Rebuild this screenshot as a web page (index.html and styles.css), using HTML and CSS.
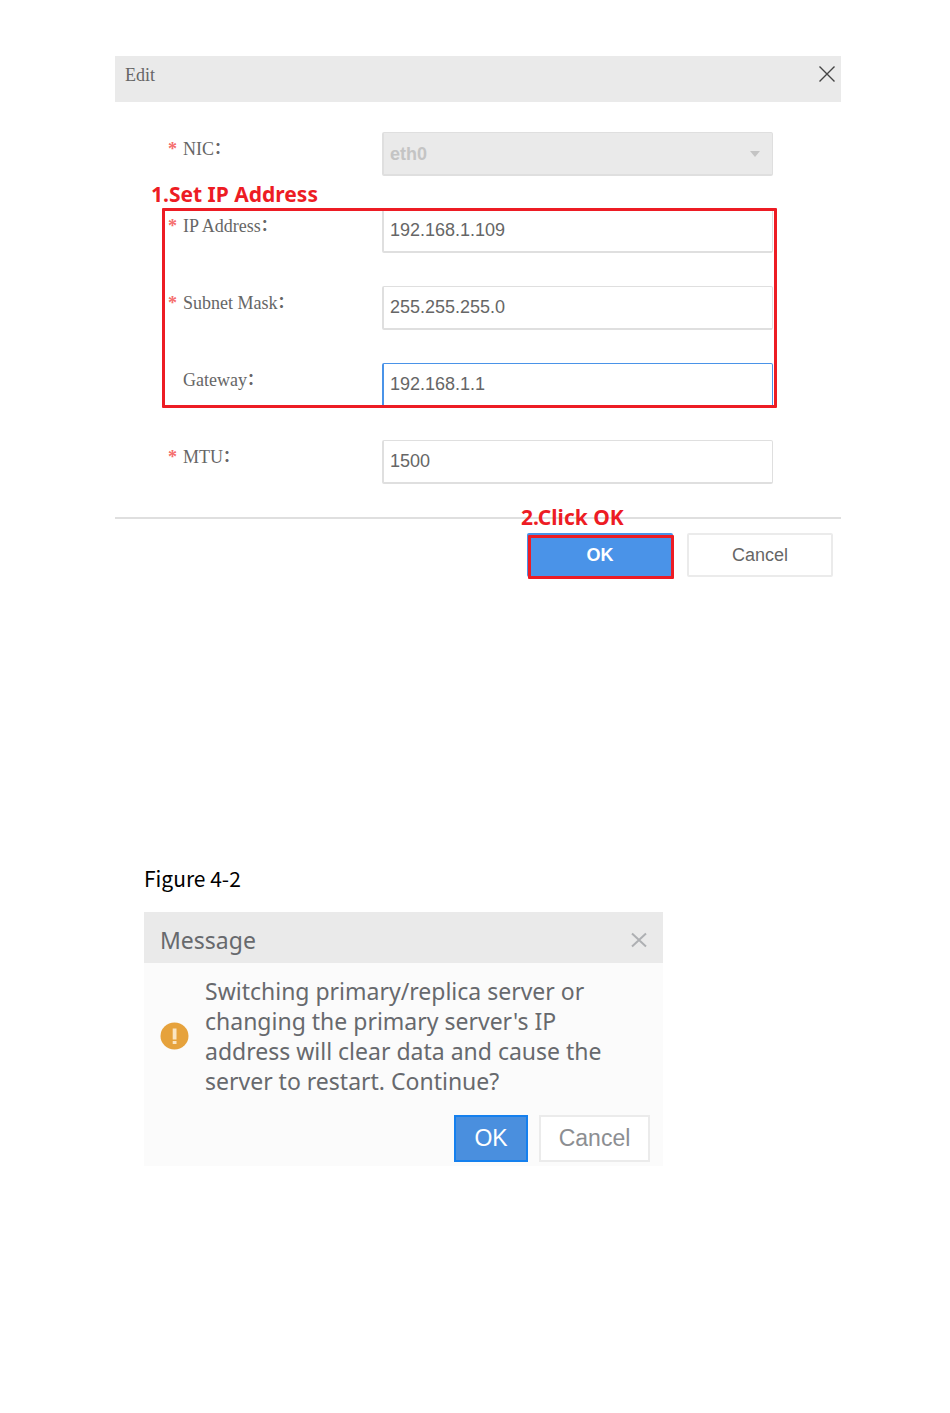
FILE: index.html
```html
<!DOCTYPE html>
<html lang="en">
  <head>
    <meta charset="UTF-8" />
    <meta name="viewport" content="width=device-width, initial-scale=1.0" />
    <title>Edit</title>
    <link rel="stylesheet" href="styles.css">
  </head>
  <body>
    <form class="dialog">
      <div class="dialog-header">
        <h1 class="dialog-title">Edit</h1>
        <button type="button" class="close-btn" aria-label="Close">
          <svg width="18" height="18" viewBox="0 0 18 18" fill="none" stroke="#444" stroke-width="1.4">
            <path d="M1.5 1.5l15 15M16.5 1.5l-15 15" />
          </svg>
        </button>
      </div>

      <div class="dialog-body">
        <div class="row">
          <label for="nic"><span class="star">*</span>NIC<b>：</b></label>
          <div class="select-box">
            <select id="nic" class="field" disabled>
              <option>eth0</option>
            </select>
          </div>
        </div>

        <div class="step-box">
          <span class="step-text step-one">1.Set IP Address</span>
          <div class="row">
            <label for="ip"><span class="star">*</span>IP Address<b>：</b></label>
            <input type="text" id="ip" class="field" value="192.168.1.109" />
          </div>
          <div class="row">
            <label for="mask"><span class="star">*</span>Subnet Mask<b>：</b></label>
            <input type="text" id="mask" class="field" value="255.255.255.0" />
          </div>
          <div class="row">
            <label for="gateway"><span class="star"></span>Gateway<b>：</b></label>
            <input type="text" id="gateway" class="field active" value="192.168.1.1" />
          </div>
        </div>

        <div class="row">
          <label for="mtu"><span class="star">*</span>MTU<b>：</b></label>
          <input type="text" id="mtu" class="field" value="1500" />
        </div>
      </div>

      <div class="dialog-footer">
        <div class="ok-box">
          <span class="step-text step-two">2.Click OK</span>
          <button type="button" class="btn btn-ok">OK</button>
        </div>
        <button type="button" class="btn">Cancel</button>
      </div>
    </form>

    <section class="figure">
      <p class="caption">Figure 4-2</p>
      <div class="message">
        <div class="message-header">
          <h2 class="message-title">Message</h2>
          <button type="button" class="close-btn" aria-label="Close">
            <svg width="18" height="18" viewBox="0 0 18 18" fill="none" stroke="#aeb0b3" stroke-width="2">
              <path d="M2 2.5l14 13M16 2.5l-14 13" />
            </svg>
          </button>
        </div>
        <div class="message-body">
          <svg class="warn-icon" width="29" height="28" viewBox="0 0 29 28">
            <ellipse cx="14.5" cy="14" rx="14" ry="13.5" fill="#e6a23c" />
            <path d="M12.7 6.5h3.8v11h-3.8zM12.7 19h3.8v3h-3.8z" fill="#fae5c3" />
          </svg>
          <p class="message-text">Switching primary/replica server or changing the primary server's IP address will clear data and cause the server to restart. Continue?</p>
        </div>
        <div class="message-footer">
          <button type="button" class="msg-btn msg-ok">OK</button>
          <button type="button" class="msg-btn">Cancel</button>
        </div>
      </div>
    </section>
  </body>
</html>
```
FILE: styles.css
```css
* {
  box-sizing: border-box;
}

body {
  margin: 0;
  padding: 56px 109px 56px 115px;
  background-color: #fff;
  color: #666;
  font-family: "Liberation Sans", Arial, sans-serif;
}

.dialog-header {
  display: flex;
  justify-content: space-between;
  align-items: flex-start;
  height: 46px;
  padding: 9px 5px 0 10px;
  background-color: #eaeaea;
}

.dialog-title {
  margin: 0;
  font-family: "Liberation Serif", "Times New Roman", serif;
  font-size: 18px;
  font-weight: normal;
  line-height: 20px;
}

.close-btn {
  display: flex;
  padding: 0;
  border: none;
  background: none;
  cursor: pointer;
}

.dialog-body {
  display: flex;
  flex-direction: column;
  gap: 33px;
  padding: 30px 68px 33px 53px;
}

.row {
  display: grid;
  grid-template-columns: 214px 1fr;
}

.row label {
  display: flex;
  font-family: "Liberation Serif", "Times New Roman", "Noto Sans CJK SC", serif;
  font-size: 18px;
  line-height: 34px;
}

.row label b {
  font-size: 16px;
}

.star {
  width: 15px;
  color: #f56c6c;
  font-weight: bold;
}

.field {
  width: 100%;
  height: 44px;
  padding: 0 6px;
  border: 1px solid #dfdfdf;
  border-left-width: 2px;
  border-bottom-width: 2px;
  border-radius: 2px;
  outline: none;
  background-color: #fff;
  color: #666;
  font-family: "Liberation Sans", Arial, sans-serif;
  font-size: 18px;
}

.field.active {
  border-color: #4a93e8;
}

.select-box {
  position: relative;
}

select.field {
  appearance: none;
  background-color: #eaeaea;
  color: #c4c4c4;
  font-weight: bold;
  opacity: 1;
}

.select-box::after {
  content: "";
  position: absolute;
  top: 19px;
  right: 13px;
  border: 5px solid transparent;
  border-top: 6px solid #c4c4c4;
  border-bottom: none;
}

/* red step marks */
.step-box {
  position: relative;
  display: flex;
  flex-direction: column;
  gap: 33px;
}

.step-box::after {
  content: "";
  position: absolute;
  inset: -1px -4px -1px -6px;
  border: 3px solid #ed1c24;
  border-radius: 1px;
  pointer-events: none;
}

.step-text {
  position: absolute;
  color: #ed1c24;
  font-family: "Noto Sans", sans-serif;
  font-size: 21px;
  font-weight: bold;
  line-height: 24px;
  white-space: nowrap;
}

.step-one {
  top: -27px;
  left: -17px;
}

.step-two {
  top: -28px;
  left: -6px;
}

.dialog-footer {
  display: flex;
  justify-content: flex-end;
  gap: 14px;
  padding: 14px 8px 0;
  border-top: 2px solid #dfdfdf;
}

.btn {
  width: 146px;
  height: 44px;
  border: 2px solid #ebebeb;
  border-radius: 2px;
  background-color: #fff;
  color: #666;
  font-family: "Liberation Sans", Arial, sans-serif;
  font-size: 18px;
  cursor: pointer;
}

.ok-box {
  position: relative;
}

.ok-box::after {
  content: "";
  position: absolute;
  inset: 2px -1px -2px 1px;
  border: 3px solid #ed1c24;
  border-radius: 1px;
  pointer-events: none;
}

.btn-ok {
  display: block;
  border-color: #4a93e8;
  background-color: #4a93e8;
  color: #fff;
  font-weight: bold;
}

/* message box */
.figure {
  max-width: 548px;
  margin-top: 285px;
  padding-left: 29px;
}

.caption {
  margin: 0 0 18px;
  color: #000;
  font-family: "Noto Sans CJK SC", sans-serif;
  font-size: 21px;
  line-height: 32px;
}

.message {
  background-color: #fbfbfb;
}

.message-header {
  display: flex;
  justify-content: space-between;
  align-items: center;
  height: 51px;
  padding: 4px 15px 0 16px;
  background-color: #eaeaea;
}

.message-title,
.message-text {
  margin: 0;
  color: #67696d;
  font-family: "Noto Sans", sans-serif;
  font-size: 23px;
  font-weight: normal;
  line-height: 30px;
}

.message-body {
  display: flex;
  align-items: center;
  gap: 16px;
  padding: 13px 50px 0 16px;
}

.warn-icon {
  flex: none;
}

.message-footer {
  display: flex;
  justify-content: flex-end;
  gap: 11px;
  padding: 19px 13px 4px;
}

.msg-btn {
  width: 111px;
  height: 47px;
  padding: 0;
  border: 2px solid #ebebeb;
  background-color: #fff;
  color: #8c8e92;
  font-family: "Liberation Sans", Arial, sans-serif;
  font-size: 23px;
  cursor: pointer;
}

.msg-ok {
  width: 74px;
  border-color: #1580ee;
  background-color: #4a8fde;
  color: #fff;
}
```
